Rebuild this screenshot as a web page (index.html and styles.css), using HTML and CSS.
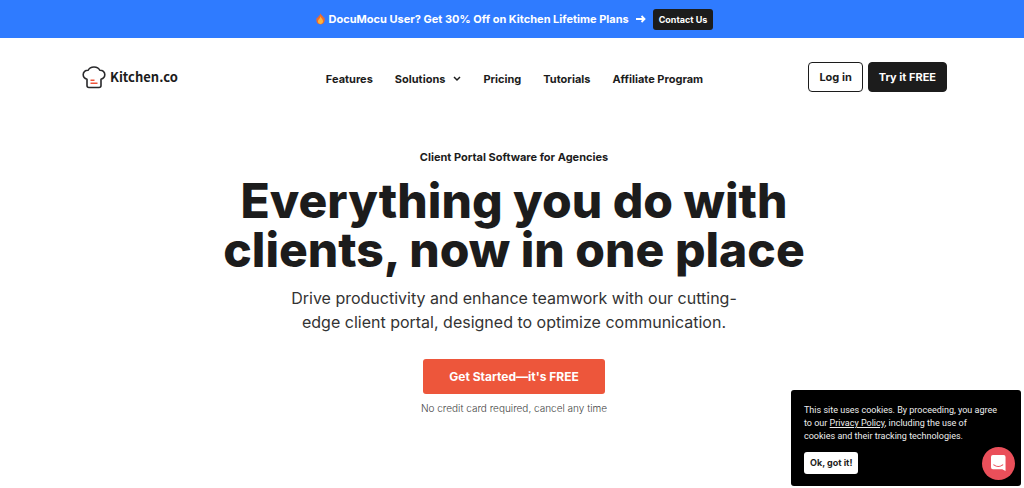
FILE: index.html
```html
<!DOCTYPE html>
<html lang="en">
<head>
<meta charset="utf-8">
<meta name="viewport" content="width=device-width, initial-scale=1">
<title>Kitchen.co</title>
<link rel="stylesheet" href="styles.css">
</head>
<body>
<div class="banner">
  <svg class="flame" viewBox="0 0 10 13" aria-hidden="true"><path fill="#ee6a2c" d="M5 0C5.300 2 8 3.200 8.500 5L9.200 4.500C10.600 8.500 9 12.500 5 12.500S-.6 8.500 1 4.500L2 5.500C2 3 4.800 2.500 5 0Z"/><path fill="#fdb53a" d="M5.200 3.500C5.500 6 8 6.700 7.800 9.300 7.600 11.200 6.500 12 5 12S2.200 11 2.200 9.200C2.200 7 4.800 6 5.200 3.500Z"/></svg>
  <span class="banner-text">DocuMocu User? Get 30% Off on Kitchen Lifetime Plans</span>
  <svg class="arrow" viewBox="0 0 10 8" aria-hidden="true"><path d="M0 4H8M5.500 1 8.500 4 5.500 7" fill="none" stroke="#fff" stroke-width="1.800"/></svg>
  <a class="banner-button" href="#">Contact Us</a>
</div>
<header class="header">
  <a class="logo" href="#">
    <svg class="logo-icon" viewBox="0 0 24 23" aria-hidden="true"><path d="M5 13.200C2.500 12.600 1.200 10.700 1.200 8.600 1.200 5.900 3.300 4.200 6.200 4.300 7.200 2 9.200 1 12 1S16.800 2 17.800 4.300C20.700 4.200 22.800 5.900 22.800 8.600 22.800 10.700 21.500 12.600 19 13.200V19.500Q19 21.500 17 21.500H7Q5 21.500 5 19.500Z" fill="#fff" stroke="#29292b" stroke-width="1.600" stroke-linejoin="round"/><path d="M8.500 14.300H12.500M8.500 17.300H15.500" stroke="#f0553a" stroke-width="1.500"/></svg>
    <span>Kitchen.co</span>
  </a>
  <nav class="nav">
    <a href="#">Features</a>
    <a class="nav-menu" href="#">Solutions <svg class="chevron" viewBox="0 0 8 6" aria-hidden="true"><path d="M1 1 4 4 7 1" fill="none" stroke="#1c1c1c" stroke-width="1.500"/></svg></a>
    <a href="#">Pricing</a>
    <a href="#">Tutorials</a>
    <a href="#">Affiliate Program</a>
  </nav>
  <div class="account">
    <a class="button button-outline" href="#">Log in</a>
    <a class="button button-dark" href="#">Try it FREE</a>
  </div>
</header>
<main class="hero">
  <p class="eyebrow">Client Portal Software for Agencies</p>
  <h1 class="title">Everything you do with clients, now in one place</h1>
  <p class="lead">Drive productivity and enhance teamwork with our cutting-edge client portal, designed to optimize communication.</p>
  <a class="cta" href="#">Get Started—it's FREE</a>
  <p class="note">No credit card required, cancel any time</p>
</main>
<aside class="cookies" aria-label="Cookie notice">
  <p class="cookies-text">This site uses cookies. By proceeding, you agree to our <a href="#">Privacy Policy</a>, including the use of cookies and their tracking technologies.</p>
  <button class="cookies-button" type="button">Ok, got it!</button>
</aside>
<button class="chat" type="button" aria-label="Open chat"><svg class="chat-icon" viewBox="0 0 16 18" aria-hidden="true"><path d="M2 0H13.500Q15.500 0 15.500 2V17L12 15H2Q0 15 0 13V2Q0 0 2 0Z" fill="#fff"/><path d="M3 10.500Q7.800 14 12.500 10.500" fill="none" stroke="#ea4f5a" stroke-width="1.200" stroke-linecap="round"/></svg></button>
</body>
</html>
```
FILE: styles.css
```css
* { box-sizing: border-box; }
body {
  margin: 0;
  background: #fff;
  color: #1c1c1c;
  font-family: Inter, "Liberation Sans", sans-serif;
}
a { color: inherit; text-decoration: none; }
p, h1 { margin: 0; }
svg { display: block; flex: none; }

.banner {
  display: flex;
  align-items: center;
  justify-content: center;
  height: 38px;
  padding-left: 5px;
  background: #2f7bff;
  color: #fff;
  font-size: 11px;
  font-weight: 700;
}
.flame { width: 9px; height: 12px; margin-right: 4px; }
.arrow { width: 10px; height: 8px; margin: 0 7px; }
.banner-button {
  padding: 0 6px;
  border-radius: 3px;
  background: #1c1c1c;
  font-size: 9px;
  line-height: 21px;
}

.header {
  display: grid;
  grid-template-columns: 1fr auto 1fr;
  align-items: center;
  padding: 24px 77px 0 82px;
}
.logo {
  display: flex;
  align-items: center;
  gap: 4px;
  font-family: "Noto Sans CJK JP", sans-serif;
  font-size: 13px;
  font-weight: 700;
  line-height: 20px;
}
.logo-icon { width: 24px; height: 23px; }
.nav {
  display: flex;
  gap: 22px;
  padding-top: 4px;
  font-size: 11px;
  font-weight: 700;
}
.nav-menu { display: flex; align-items: center; gap: 8px; }
.chevron { width: 8px; height: 6px; }
.account { display: flex; justify-content: flex-end; gap: 5px; }
.button {
  padding: 0 10px;
  border: 1px solid #1c1c1c;
  border-radius: 4px;
  font-size: 11px;
  font-weight: 700;
  line-height: 28px;
}
.button-dark { background: #1c1c1c; color: #fff; }

.hero {
  display: flex;
  flex-direction: column;
  align-items: center;
  padding: 57px 16px 0 20px;
  text-align: center;
}
.eyebrow { font-size: 11px; font-weight: 700; line-height: 16px; }
.title {
  max-width: 620px;
  margin-top: 11px;
  font-size: 48px;
  font-weight: 800;
  line-height: 49px;
}
.lead {
  max-width: 470px;
  margin-top: 12px;
  color: #333;
  font-size: 16px;
  font-weight: 400;
  line-height: 24px;
}
.cta {
  margin-top: 25px;
  padding: 0 26px;
  border-radius: 3px;
  background: #ed563b;
  color: #fff;
  font-size: 12px;
  font-weight: 700;
  line-height: 35px;
}
.note { margin-top: 6px; color: #444; font-size: 10px; font-weight: 300; line-height: 16px; }

.cookies {
  position: fixed;
  right: 3px;
  bottom: 2px;
  width: 230px;
  padding: 14px 13px 12px;
  border-radius: 3px;
  background: #000;
  color: #eee;
}
.cookies-text {
  max-width: 196px;
  font-family: Roboto, sans-serif;
  font-size: 9px;
  line-height: 13px;
}
.cookies-text a { text-decoration: underline; }
.cookies-button {
  margin-top: 9px;
  padding: 0 6px;
  border: 0;
  border-radius: 3px;
  background: #fff;
  color: #1c1c1c;
  font-family: inherit;
  font-size: 9px;
  font-weight: 700;
  line-height: 22px;
}
.chat {
  position: fixed;
  right: 9px;
  bottom: 8px;
  display: grid;
  place-items: center;
  width: 33px;
  height: 33px;
  padding: 0;
  border: 0;
  border-radius: 50%;
  background: #ea4f5a;
}
.chat-icon { width: 15px; height: 17px; }
```
